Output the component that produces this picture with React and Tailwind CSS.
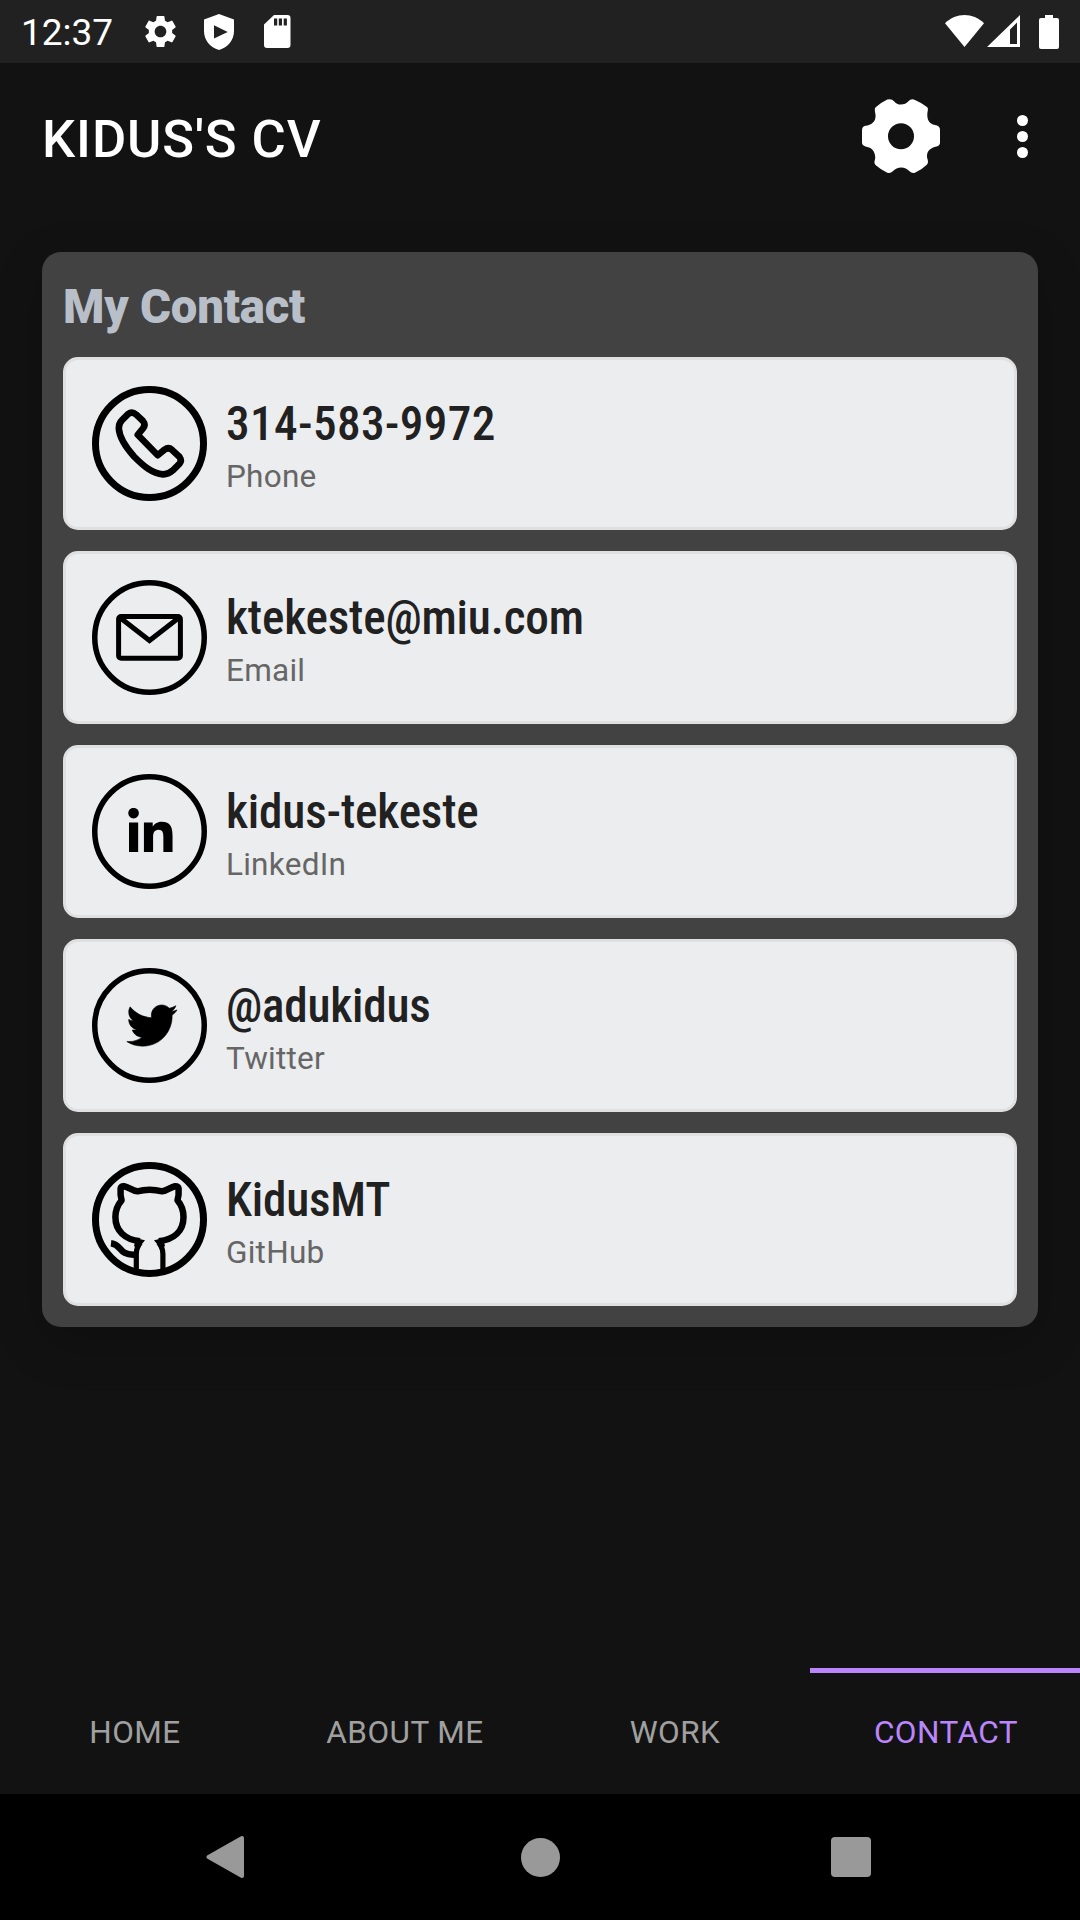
import React from "react";
import { MdSettings } from "react-icons/md";
import { FaLinkedinIn, FaTwitter } from "react-icons/fa";

function Ring({ width, children }) {
  return (
    <svg className="size-[115px] shrink-0" viewBox="0 0 115 115" fill="none" stroke="#000">
      <circle cx="57.5" cy="57.5" r={57.5 - width / 2} strokeWidth={width} />
      {children}
    </svg>
  );
}

function PhoneIcon() {
  return (
    <Ring width={7}>
      <path
        strokeWidth="6.6"
        strokeLinejoin="round"
        d="M36 28.2Q40 25 44 28.4L51 35Q54 38.6 51 42.4L45.7 48.8L65.7 69.2L72.5 63.6Q76.5 60.8 80 63.8L87.6 71Q90 74.5 87.6 77.6L80.6 84.6Q76 88.6 71 88.4C60 87.5 52 80.5 42 70.5C33 60.5 27.5 52 26.8 42.6Q26.7 37.5 30 34.2Z"
      />
    </Ring>
  );
}

function MailIcon() {
  return (
    <Ring width={5.5}>
      <rect x="26.6" y="36.5" width="61.8" height="41.8" rx="2.5" strokeWidth="5" />
      <path strokeWidth="5" d="M27.5 37.2L57.5 60.5L87.5 37.2" />
    </Ring>
  );
}

function LinkedInIcon() {
  return (
    <Ring width={5.5}>
      <FaLinkedinIn x="33.1" y="33.8" size={50.6} fill="#000" stroke="none" />
    </Ring>
  );
}

function TwitterIcon() {
  return (
    <Ring width={5.5}>
      <FaTwitter x="34.6" y="32.2" size={50.7} fill="#000" stroke="#000" strokeWidth="6" />
    </Ring>
  );
}

function GitHubIcon() {
  return (
    <Ring width={7}>
      <g strokeWidth="6.5">
        <path
          strokeLinejoin="round"
          d="M48 79.3C33 77.5 23.4 69 23.4 55C23.4 47.5 25.5 43 29.6 38.3C28.4 34.5 28.3 31 28.6 26.5Q28.8 23.9 32 24.2C37 25 40 29 45.3 29.3C53 27.2 62 27.2 70.3 29.3C75 29 78.5 25 83 24.2Q86.4 23.9 86.6 26.5C86.9 31 86.7 34.5 85.5 38.3C89.6 43 91.5 47.5 91.5 55C91.5 69 82 77.5 66.8 79.3"
        />
        <path strokeWidth="5.2" d="M48.5 80.5C45.5 84 44.3 87 44.3 92V111M66.5 80.5C69.7 84 70.9 87 70.9 92V111" />
        <path d="M19 81.2C30.5 82.5 26 93.5 43 92.6" />
        <path fill="#000" stroke="none" d="M44 76.2L53 78.3Q49 82 47 88L42 84ZM71 76.2L62 78.3Q66 82 68 88L73 84Z" />
      </g>
    </Ring>
  );
}

const CONTACTS = [
  { value: "314-583-9972", label: "Phone", Icon: PhoneIcon, tracking: "tracking-[0.36px]" },
  { value: "ktekeste@miu.com", label: "Email", Icon: MailIcon, tracking: "tracking-[-0.17px]" },
  { value: "kidus-tekeste", label: "LinkedIn", Icon: LinkedInIcon, tracking: "tracking-[-0.17px]" },
  { value: "@adukidus", label: "Twitter", Icon: TwitterIcon, tracking: "tracking-[-0.22px]" },
  { value: "KidusMT", label: "GitHub", Icon: GitHubIcon, tracking: "tracking-[-0.2px]" },
];

const TABS = ["HOME", "ABOUT ME", "WORK", "CONTACT"];

function StatusBar() {
  return (
    <div className="flex h-[63px] shrink-0 items-center bg-[#212121] px-[21px] text-white">
      <span className="w-[120px] pt-[2px] text-[37px] leading-none">12:37</span>
      <MdSettings className="size-[39px]" />
      <svg className="ml-[24px] h-[36px] w-[30px]" viewBox="0 0 30 36">
        <path fill="#fff" fillRule="evenodd" d="M15 0L30 5.5V17C30 26 24 33.5 15 36C6 33.5 0 26 0 17V5.5ZM10 11.3V24.6L23.7 18Z" />
      </svg>
      <svg className="ml-[30px] h-[33px] w-[27px]" viewBox="0 0 27 33">
        <path fill="#fff" fillRule="evenodd" d="M10 0H23.5Q26.500 0 26.500 3V30Q26.500 33 23.500 33H3Q0 33 0 30V9.500ZM10 3.500V10.500H13.200V3.500ZM14.800 3.500V10.500H18V3.500ZM19.700 3.500V10.500H22.900V3.500Z" />
      </svg>
      <svg className="ml-auto h-[33px] w-[39px]" viewBox="0 0 39 33">
        <path fill="#fff" d="M0 8.3C11 -2.7 28 -2.7 39 8.3L19.5 32Z" />
      </svg>
      <svg className="ml-[3px] h-[33px] w-[33px]" viewBox="0 0 33 33">
        <path fill="#fff" fillRule="evenodd" d="M33 0V32H0ZM30 7.5L23 14.5V29H30Z" />
      </svg>
      <svg className="ml-[19px] h-[34px] w-[20px]" viewBox="0 0 20 34">
        <path fill="#fff" d="M6 0H14V3H18Q20 3 20 5V32Q20 34 18 34H2Q0 34 0 32V5Q0 3 2 3H6Z" />
      </svg>
    </div>
  );
}

function AppBar() {
  return (
    <header className="flex h-[147px] shrink-0 items-center pr-[52px] pl-[42px] text-white">
      <h1 className="pt-[5px] text-[52.5px] leading-none font-medium tracking-[0.92px]">KIDUS'S CV</h1>
      <svg className="ml-auto h-[75px] w-[78px]" viewBox="0 0 78 75">
        <path
          fill="#fff"
          fillRule="evenodd"
          d="M25.3 0.500Q29.500 -0.800 32.300 2.500C35 6.700 43 6.700 46.700 2Q49 -0.700 53 1Q60 4 65 8Q66.300 9.300 65.800 11.500C64.500 17 65.500 24 71 25.500L75 26.500Q78 27.500 78 31V43.500Q78 46.800 74.500 47.400C68 48.500 64 53 65.200 59C66.200 62 66.500 64.200 64.500 66Q60 70.500 53 73.700Q50 74.700 47.500 72.300C43.500 67.200 35 67.200 30.800 72.300Q28.500 74.700 25.300 73.700Q18.500 70.500 13.500 66Q12 64.500 12.600 62C14.500 57 12 50 7 48.500L3.500 47.400Q0 46.500 0 43.500V31Q0 27.500 3.500 26.800C10 26.200 14.500 22 13.400 15C12.700 11.500 12.300 9.500 14 8Q19 3.500 25.300 0.500ZM39 24.200A13 13 0 1 0 39 50.200A13 13 0 1 0 39 24.200Z"
        />
      </svg>
      <div className="ml-[77px] flex flex-col gap-[5px]">
        <i className="size-[11px] rounded-full bg-white" />
        <i className="size-[11px] rounded-full bg-white" />
        <i className="size-[11px] rounded-full bg-white" />
      </div>
    </header>
  );
}

function ContactCard({ value, label, Icon, tracking }) {
  return (
    <li className="flex h-[173px] items-center rounded-[15px] border-[3px] border-[#e0e0e0] bg-[#ecedef] pl-[26px]">
      <Icon />
      <div className="ml-[19px] pt-[5px]">
        <p
          className={`font-['Roboto_Condensed','Roboto',sans-serif] text-[47.25px] leading-[55px] font-medium text-[#212121] [font-stretch:75%] ${tracking}`}
        >
          {value}
        </p>
        <p className="mt-[6px] text-[31.5px] leading-[37px] tracking-[0.25px] text-[#666]">{label}</p>
      </div>
    </li>
  );
}

export default function App() {
  return (
    <div className="flex h-[1920px] w-[1080px] flex-col overflow-hidden bg-[#121212] font-['Roboto',sans-serif]">
      <StatusBar />
      <AppBar />
      <main className="flex-1 px-[42px] pt-[42px]">
        <section className="h-[1075px] rounded-[19px] bg-[#424242] px-[21px] pt-[21px] shadow-[0_16px_50px_rgba(0,0,0,0.2)]">
          <h2 className="h-[84px] pt-[7px] text-[47.25px] leading-[55px] font-black tracking-[-0.2px] text-[#b8bfc8]">
            My Contact
          </h2>
          <ul className="flex flex-col gap-[21px]">
            {CONTACTS.map((c) => (
              <ContactCard key={c.label} {...c} />
            ))}
          </ul>
        </section>
      </main>
      <nav className="grid h-[126px] shrink-0 grid-cols-4 text-[31.5px] tracking-[0.45px]">
        {TABS.map((t) => (
          <button
            key={t}
            className={
              t === "CONTACT"
                ? "border-t-[5px] border-[#bb86fc] pb-[2px] pl-[2px] text-[#bb86fc]"
                : "border-t-[5px] border-transparent pb-[2px] text-[#a0a0a0]"
            }
          >
            {t}
          </button>
        ))}
      </nav>
      <footer className="flex h-[126px] shrink-0 items-center bg-black pl-[206px]">
        <svg className="h-[44px] w-[38px]" viewBox="0 0 38 44">
          <path fill="#999" stroke="#999" strokeWidth="4" strokeLinejoin="round" d="M2.5 22L36 3V41Z" />
        </svg>
        <i className="ml-[276.5px] size-[39px] rounded-full bg-[#999]" />
        <i className="ml-[271.5px] size-[40px] rounded-[4px] bg-[#999]" />
      </footer>
    </div>
  );
}
